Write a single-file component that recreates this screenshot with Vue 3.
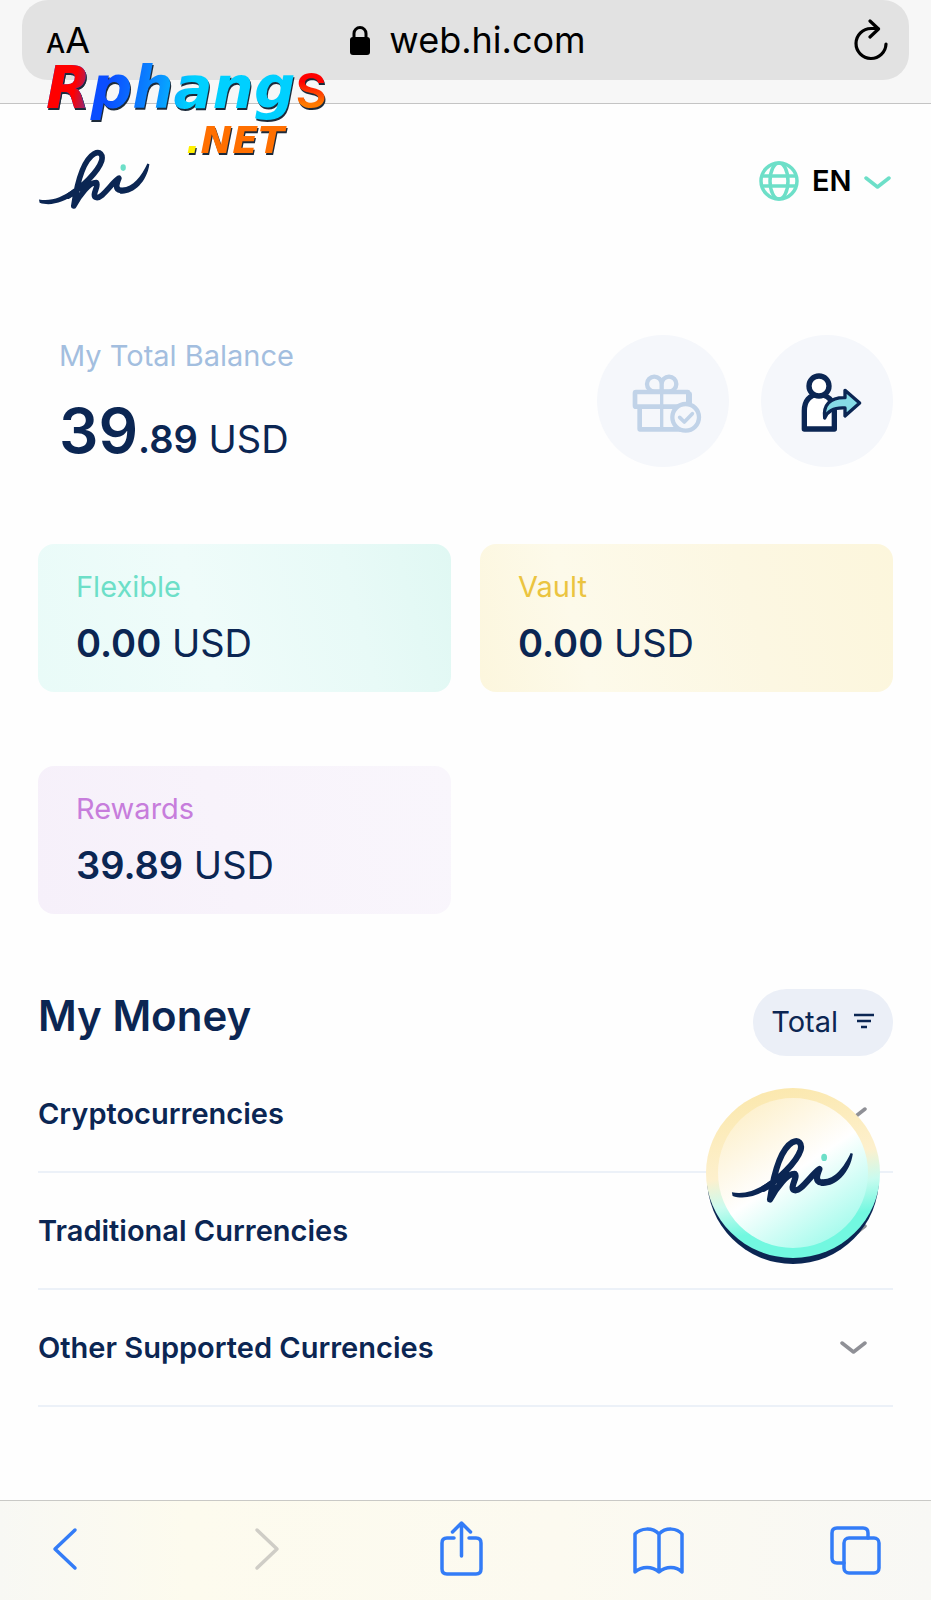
<template>
  <div class="app">
    <header class="browser-bar">
      <div class="address">
        <button class="text-size" aria-label="Text size"><small>A</small>A</button>
        <button class="url">
          <svg width="22" height="30" viewBox="0 0 22 30" aria-hidden="true">
            <rect x="1" y="12" width="20" height="18" rx="3" />
            <path d="M5 13V8.500a6 6 0 0 1 12 0V13" fill="none" stroke="#000" stroke-width="3" />
          </svg>
          <span>web.hi.com</span>
        </button>
        <button class="reload" aria-label="Reload">
          <svg width="36" height="42" viewBox="0 0 36 42" fill="none" stroke="#000" stroke-width="3.200" stroke-linecap="round" stroke-linejoin="round" aria-hidden="true">
            <path d="M25 9.500H18A15 15 0 1 0 33 25" />
            <path d="M17 2l8.500 8-8.500 8" />
          </svg>
        </button>
      </div>
      <div class="watermark">
        <div class="mark-top"><span class="mark-name"><span class="mark-r">R</span>phang</span><span class="mark-s">S</span></div>
        <div class="mark-net"><span>.</span>NET</div>
      </div>
    </header>

    <main class="page">
      <div class="site-head">
        <a href="#" class="logo" aria-label="hi">
          <svg width="115" height="63" viewBox="115 448 345 190" aria-hidden="true">
            <use href="#hi-mark" />
          </svg>
        </a>
        <label class="lang">
          <svg width="42" height="42" viewBox="0 0 42 42" fill="none" stroke="#6ddfc8" stroke-width="3.500" aria-hidden="true">
            <circle cx="21" cy="21" r="18" />
            <ellipse cx="21" cy="21" rx="9" ry="18" />
            <path d="M3 16h36M3 26h36" />
          </svg>
          <select v-model="lang" aria-label="Language">
            <option>EN</option>
          </select>
          <svg width="29" height="20" viewBox="0 0 29 20" fill="none" stroke="#6ddfc8" stroke-width="3.500" stroke-linecap="round" stroke-linejoin="round" aria-hidden="true">
            <path d="M2 7l11.500 9L25 7" />
          </svg>
        </label>
      </div>

      <section class="balance">
        <div class="balance-text">
          <p class="balance-label">My Total Balance</p>
          <p class="balance-amount"><b>39</b><strong>.89</strong> <span>USD</span></p>
        </div>
        <div class="balance-actions">
          <button class="round" aria-label="Gifts">
            <svg width="80" height="70" viewBox="-24 -18 240 210" fill="none" stroke="#c1d3e8" stroke-width="14" stroke-linejoin="round" stroke-linecap="round" aria-hidden="true">
              <path d="M26 66h150v106H26z" />
              <rect x="12" y="60" width="160" height="44" rx="3" fill="#f5f7fb" />
              <path d="M92 60v110" stroke-width="10" stroke-linecap="butt" />
              <path d="M90 58H70a22 22 0 1 1 22-22v22M94 58h20a22 22 0 1 0-22-22" stroke-width="13" />
              <circle cx="164" cy="136" r="40" fill="#f5f7fb" stroke-width="13" />
              <path d="M146 136l14 14 24-25" stroke-width="11" />
            </svg>
          </button>
          <button class="round" aria-label="Invite a friend">
            <svg width="72" height="72" viewBox="-18 -21 216 216" fill="#fff" stroke="#0b2653" stroke-width="16" stroke-linejoin="round" aria-hidden="true">
              <path d="M22 171v-54c0-30 16-49 42-49s48 16 48 49v54z" />
              <circle cx="66" cy="42" r="30" />
              <path d="M83 138c-5-38 15-62 61-61V55l44 38-44 39v-24c-30-2-50 5-61 30z" fill="#86dce6" stroke-width="10" />
            </svg>
          </button>
        </div>
      </section>

      <section class="cards">
        <div v-for="card in cards" :key="card.name" class="card" :class="card.type">
          <p class="card-name">{{ card.name }}</p>
          <p class="card-value"><strong>{{ card.value }}</strong> USD</p>
        </div>
      </section>

      <section class="money">
        <div class="money-head">
          <h2>My Money</h2>
          <button class="filter">
            Total
            <svg width="20" height="20" viewBox="0 0 20 20" fill="none" stroke="#0b2653" stroke-width="2.500" aria-hidden="true">
              <path d="M0 3h20M3 9h14M7 15h6" />
            </svg>
          </button>
        </div>
        <div class="list">
          <button
            v-for="group in groups"
            :key="group"
            class="row"
            :aria-expanded="opened === group"
            @click="toggle(group)"
          >
            <span>{{ group }}</span>
            <svg width="27" height="16" viewBox="0 0 27 16" fill="none" stroke="#8f9096" stroke-width="3.500" stroke-linecap="round" stroke-linejoin="round" aria-hidden="true">
              <path d="M2 3l11.500 9L25 3" />
            </svg>
          </button>
          <button class="coin" aria-label="hi">
            <svg width="174" height="178" viewBox="0 0 174 178" aria-hidden="true">
              <defs>
                <linearGradient id="rim" x1="0.400" y1="0" x2="0.600" y2="1">
                  <stop offset="0" stop-color="#fbe8ae" />
                  <stop offset="0.450" stop-color="#fdf0cd" />
                  <stop offset="0.620" stop-color="#c9fbef" />
                  <stop offset="0.800" stop-color="#72f8e0" />
                  <stop offset="1" stop-color="#72f8e0" />
                </linearGradient>
                <linearGradient id="face" x1="0.200" y1="0.050" x2="0.800" y2="0.950">
                  <stop offset="0" stop-color="#fdf0cc" />
                  <stop offset="0.500" stop-color="#ffffff" />
                  <stop offset="1" stop-color="#a2fbec" />
                </linearGradient>
                <g id="hi-mark">
                  <path d="M117 600C150 607 185 596 222 568L231 581C190 611 150 621 119 610Z" fill="#0b2653" />
                  <path d="M364 564C398 567 425 533 444 492L450 494C442 552 396 588 361 582Z" fill="#0b2653" />
                  <path d="M205 590C245 566 296 516 306 484C311 466 301 453 284 462C250 482 232 550 222 620C240 586 270 548 290 549C300 557 274 588 289 594C307 600 335 551 358 536C352 551 344 571 364 573" fill="none" stroke="#0b2653" stroke-width="17" stroke-linecap="round" stroke-linejoin="round" />
                  <ellipse cx="371" cy="504" rx="8" ry="10" fill="#6ddfc8" />
                </g>
              </defs>
              <ellipse cx="87" cy="90" rx="86" ry="86" fill="#0b2653" />
              <ellipse cx="87" cy="85" rx="87" ry="85" fill="url(#rim)" />
              <circle cx="87" cy="85" r="75" fill="url(#face)" />
              <svg x="23" y="48" width="126" height="69" viewBox="110 445 345 190">
                <use href="#hi-mark" />
              </svg>
            </svg>
          </button>
        </div>
      </section>
    </main>

    <nav class="toolbar">
      <button aria-label="Back">
        <svg width="52" height="56" viewBox="0 0 52 56"><path d="M36 9L16 28l20 19" /></svg>
      </button>
      <button aria-label="Forward" disabled>
        <svg width="52" height="56" viewBox="0 0 52 56"><path d="M20 9l20 19-20 19" /></svg>
      </button>
      <button aria-label="Share">
        <svg width="52" height="56" viewBox="0 0 52 56">
          <path d="M19 17h-7q-5 0-5 5v26q0 5 5 5h29q5 0 5-5V22q0-5-5-5h-7M26.500 35V2M17.500 11l9-9 9 9" />
        </svg>
      </button>
      <button aria-label="Bookmarks">
        <svg width="52" height="56" viewBox="0 0 52 56">
          <path d="M27 13C20 6 9 7 3 13v38c7-6 17-6 24 0 7-6 17-6 23 0V13C45 7 34 6 27 13zM27 13v38" />
        </svg>
      </button>
      <button aria-label="Tabs">
        <svg width="52" height="56" viewBox="0 0 52 56">
          <path d="M38 17v-5q0-5-5-5H7Q2 7 2 12v25q0 5 5 5h7" />
          <rect x="14" y="17" width="35" height="35" rx="5" />
        </svg>
      </button>
    </nav>
  </div>
</template>

<script setup>
import { ref } from 'vue'

const lang = ref('EN')
const opened = ref('')

const cards = [
  { name: 'Flexible', value: '0.00', type: 'flexible' },
  { name: 'Vault', value: '0.00', type: 'vault' },
  { name: 'Rewards', value: '39.89', type: 'rewards' }
]

const groups = ['Cryptocurrencies', 'Traditional Currencies', 'Other Supported Currencies']

const toggle = (group) => {
  opened.value = opened.value === group ? '' : group
}
</script>

<style>
body {
  margin: 0;
  background: #fefefe;
}
</style>

<style scoped>
.app {
  min-height: 100vh;
  display: flex;
  flex-direction: column;
  font-family: Inter, sans-serif;
  color: #0b2653;
}
p, h2 {
  margin: 0;
}
button, select {
  font: inherit;
  color: inherit;
  background: none;
  border: none;
  padding: 0;
  cursor: pointer;
}
svg {
  display: block;
  flex: none;
}

/* browser chrome */
.browser-bar {
  position: relative;
  background: #f7f7f7;
  border-bottom: 1px solid #c4c4c4;
  padding: 0 22px 23px;
}
.address {
  display: grid;
  grid-template-columns: 1fr auto 1fr;
  align-items: center;
  height: 80px;
  padding: 0 20px 0 24px;
  border-radius: 26px;
  background: #e2e2e2;
  color: #000;
}
.text-size {
  justify-self: start;
  padding-top: 4px;
  font-size: 36px;
  line-height: 48px;
}
.text-size small {
  font-size: 27px;
  font-weight: 500;
}
.url {
  display: flex;
  align-items: center;
  gap: 18px;
  font-size: 36px;
  line-height: 48px;
}
.reload {
  justify-self: end;
}

/* overlaid site stamp */
.watermark {
  position: absolute;
  left: 46px;
  top: 56px;
  font-family: "DejaVu Sans", sans-serif;
  font-weight: bold;
  filter: drop-shadow(1px 2px 0 #1c2a3a);
}
.mark-top {
  display: flex;
  align-items: baseline;
  line-height: 64px;
}
.mark-name {
  font-size: 58px;
  font-style: oblique;
  color: transparent;
  background: linear-gradient(100deg, #0a4dff 26%, #0a8cff 44%, #00d0ff 58%);
  background-clip: text;
}
.mark-r {
  background: linear-gradient(100deg, #ff0000 60%, #5a3cb0);
  background-clip: text;
}
.mark-s {
  font-family: Inter, sans-serif;
  font-size: 48px;
  font-weight: 600;
  color: transparent;
  background: linear-gradient(#ff0000 35%, #ff7a00 70%);
  background-clip: text;
}
.mark-net {
  padding-left: 140px;
  font-size: 38px;
  line-height: 34px;
  font-style: oblique;
  color: #ff6f00;
}
.mark-net span {
  color: #fff000;
}

/* page */
.page {
  flex: 1;
  padding: 45px 38px 92px;
}
.site-head {
  display: flex;
  align-items: center;
  justify-content: space-between;
  margin-bottom: 123px;
}
.lang {
  display: flex;
  align-items: center;
  gap: 12px;
  font-size: 29px;
  font-weight: 600;
  line-height: 36px;
  color: #000;
}
.lang select {
  appearance: none;
}
.balance {
  display: flex;
  justify-content: space-between;
  align-items: flex-start;
  padding-left: 21px;
  margin-bottom: 69px;
}
.balance-text {
  padding-top: 3px;
}
.balance-label {
  font-size: 29px;
  line-height: 36px;
  color: #a3bedf;
  margin-bottom: 21px;
}
.balance-amount {
  font-size: 38px;
  line-height: 72px;
}
.balance-amount b {
  font-size: 62px;
  font-weight: 600;
}
strong {
  font-weight: 600;
}
.balance-actions {
  display: flex;
  gap: 32px;
}
.round {
  display: flex;
  align-items: center;
  justify-content: center;
  width: 132px;
  height: 132px;
  border-radius: 50%;
  background: #f5f7fb;
}

.cards {
  display: grid;
  grid-template-columns: 1fr 1fr;
  gap: 74px 29px;
  margin-bottom: 75px;
}
.card {
  padding: 25px 38px;
  border-radius: 16px;
}
.card-name {
  font-size: 29px;
  line-height: 36px;
  margin-bottom: 14px;
}
.card-value {
  font-size: 38px;
  line-height: 48px;
}
.flexible {
  background: linear-gradient(75deg, #e9fbf8, #effcfa 40%, #e8faf7 75%, #e0f8f3);
}
.flexible .card-name {
  color: #6ddfc8;
}
.vault {
  background: linear-gradient(75deg, #fcf6dd, #fdfaea 25%, #fcf7e2 65%, #fcf6dc);
}
.vault .card-name {
  color: #ebc440;
}
.rewards {
  background: linear-gradient(75deg, #f6f0fa, #f8f3fb 45%, #f9f6fc);
}
.rewards .card-name {
  color: #c77ddc;
}

.money-head {
  display: flex;
  justify-content: space-between;
  align-items: flex-start;
}
h2 {
  font-size: 42px;
  line-height: 54px;
  font-weight: 600;
}
.filter {
  display: flex;
  align-items: center;
  gap: 16px;
  height: 67px;
  padding: 0 19px 2px 18px;
  border-radius: 34px;
  background: #ebeff7;
  font-size: 29px;
}
.list {
  position: relative;
}
.row {
  display: flex;
  align-items: center;
  justify-content: space-between;
  width: 100%;
  height: 117px;
  padding-right: 26px;
  border-bottom: 2px solid #ecf1f8;
  font-size: 29px;
  font-weight: 600;
  text-align: left;
}
.coin {
  position: absolute;
  right: 13px;
  top: 32px;
}

/* bottom toolbar */
.toolbar {
  display: flex;
  justify-content: space-between;
  padding: 20px 49px 23px 39px;
  border-top: 1px solid #c9c9c6;
  background: linear-gradient(90deg, #f8f8f4, #fdfbee 20%, #fcfaf0 60%, #f8f8f5);
}
.toolbar svg {
  fill: none;
  stroke: #337cf7;
  stroke-width: 3.5;
  stroke-linecap: round;
  stroke-linejoin: round;
}
.toolbar button:disabled svg {
  stroke: #cfcdc6;
}
</style>
